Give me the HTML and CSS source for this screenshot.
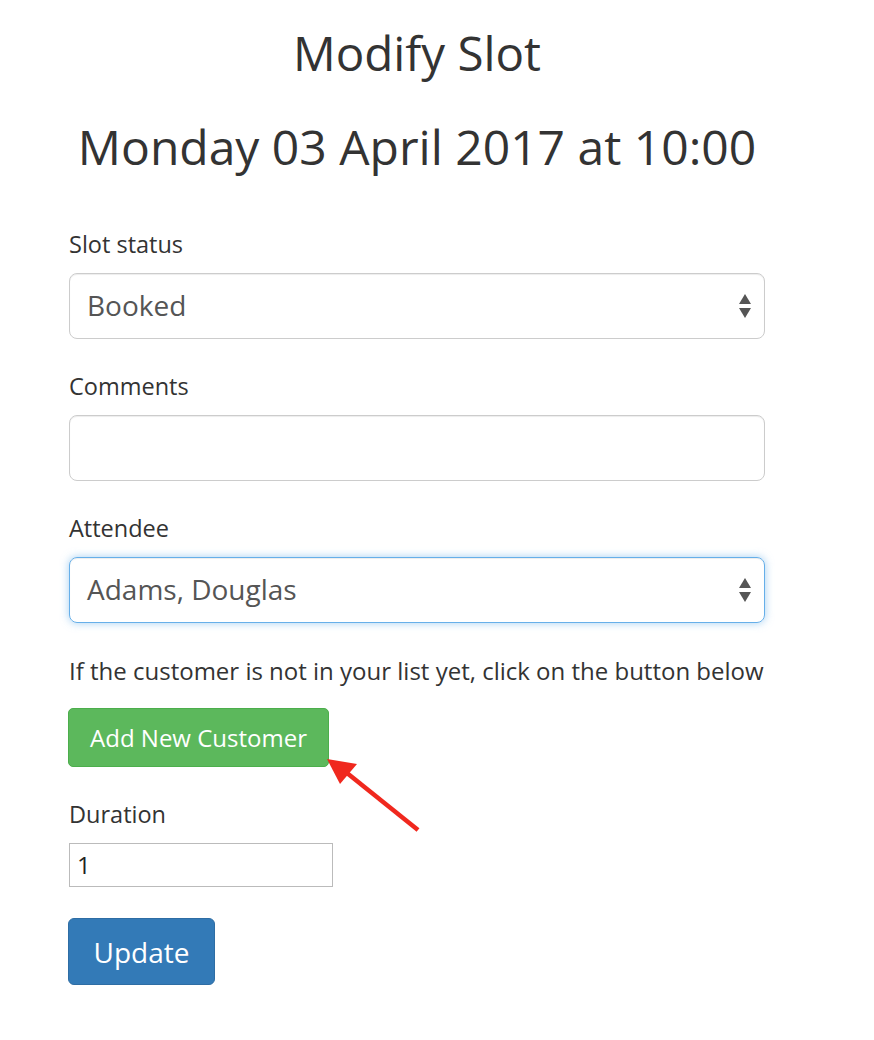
FILE: index.html
```html
<!DOCTYPE html>
<html>
<head>
<meta charset="utf-8">
<link rel="stylesheet" href="styles.css">
</head>
<body>
<div class="container">
  <h2 class="title">Modify Slot</h2>
  <h1 class="date">Monday 03 April 2017 at 10:00</h1>

  <div class="group">
    <label class="label">Slot status</label>
    <div class="select-wrap">
      <div class="control">Booked</div>
      <svg class="carets" width="14" height="26" viewBox="0 0 14 26"><path d="M7 1 L13 11 L1 11 Z" fill="#555"/><path d="M1 15 L13 15 L7 25 Z" fill="#555"/></svg>
    </div>
  </div>

  <div class="group">
    <label class="label">Comments</label>
    <div class="control"></div>
  </div>

  <div class="group">
    <label class="label">Attendee</label>
    <div class="select-wrap">
      <div class="control focus">Adams, Douglas</div>
      <svg class="carets" width="14" height="26" viewBox="0 0 14 26"><path d="M7 1 L13 11 L1 11 Z" fill="#555"/><path d="M1 15 L13 15 L7 25 Z" fill="#555"/></svg>
    </div>
  </div>

  <p class="help">If the customer is not in your list yet, click on the button below</p>

  <div class="btn-row">
    <button class="btn btn-green">Add New Customer</button>
    <svg class="arrow" width="110" height="90" viewBox="0 0 110 90">
      <line x1="98" y1="80" x2="22" y2="19" stroke="#f0281e" stroke-width="4.5"/>
      <path d="M7 9 L37 14 L20 34 Z" fill="#f0281e"/>
    </svg>
  </div>

  <div class="group">
    <label class="label">Duration</label>
    <div class="plain-input">1</div>
  </div>

  <button class="btn btn-blue">Update</button>
</div>
</body>
</html>
```

FILE: styles.css
```css
* { box-sizing: border-box; }
body {
  margin: 0;
  background: #fff;
  font-family: "Open Sans", "Noto Sans", sans-serif;
  color: #333;
}
.container {
  width: 765px;
  padding-left: 69px;
  padding-top: 27px;
  display: flex;
  flex-direction: column;
  align-items: stretch;
}
.title {
  margin: 0;
  font-size: 47.5px;
  line-height: 52px;
  font-weight: 400;
  text-align: center;
  white-space: nowrap;
}
.date {
  margin: 41px 0 0;
  font-size: 48px;
  line-height: 53px;
  font-weight: 400;
  text-align: center;
  white-space: nowrap;
}
.group {
  display: flex;
  flex-direction: column;
  margin-top: 56px;
}
.group + .group { margin-top: 32px; }
.label {
  font-size: 23.5px;
  line-height: 30px;
  font-weight: 500;
  color: #333;
  margin-bottom: 14px;
}
.select-wrap { position: relative; }
.control {
  height: 66px;
  border: 1.5px solid #ccc;
  border-radius: 8px;
  padding: 0 17px;
  font-size: 28px;
  line-height: 63px;
  color: #555;
  box-shadow: inset 0 1px 1px rgba(0,0,0,.075);
}
.control.focus {
  border-color: #66afe9;
  box-shadow: inset 0 1px 1px rgba(0,0,0,.075), 0 0 9px rgba(102,175,233,.6);
}
.carets {
  position: absolute;
  right: 13px;
  top: 20px;
}
.help {
  margin: 33px 0 0;
  font-size: 24px;
  line-height: 30px;
  color: #333;
  white-space: nowrap;
}
.btn-row {
  position: relative;
  margin-top: 22px;
  display: flex;
}
.btn {
  font-family: "Open Sans", "Noto Sans", sans-serif;
  color: #fff;
  cursor: pointer;
}
.btn-green {
  width: 261px;
  height: 59px;
  margin-left: -1px;
  background: #5cb85c;
  border: 1.5px solid #4cae4c;
  border-radius: 5px;
  font-size: 24px;
  padding: 0;
}
.arrow {
  position: absolute;
  left: 251px;
  top: 42px;
}
.btn-row + .group { margin-top: 32px; }
.plain-input {
  width: 264px;
  height: 44px;
  border: 1px solid #bbb;
  padding: 0 7px;
  font-size: 24px;
  line-height: 42px;
  color: #222;
}
.btn-blue {
  align-self: flex-start;
  margin-top: 31px;
  margin-left: -1px;
  width: 147px;
  height: 67px;
  background: #337ab7;
  border: 1.5px solid #2e6da4;
  border-radius: 6px;
  font-size: 28px;
  padding: 0;
}
```
